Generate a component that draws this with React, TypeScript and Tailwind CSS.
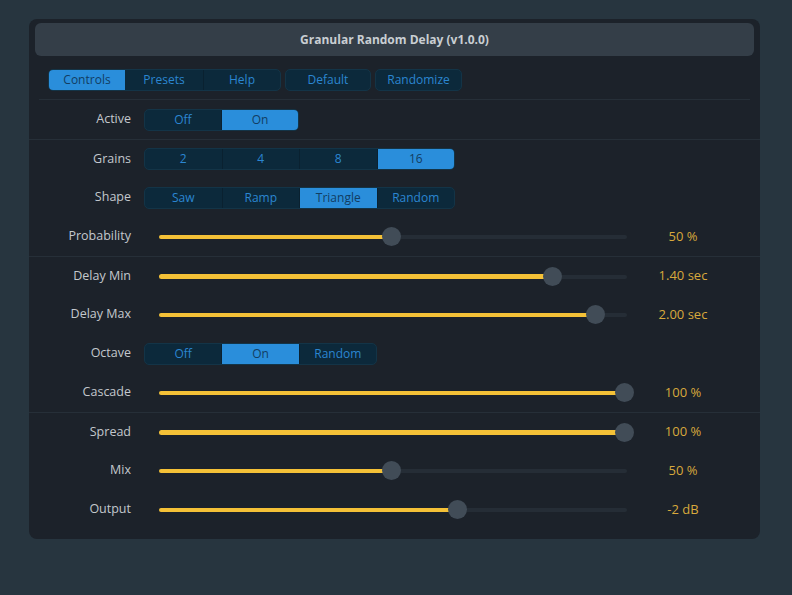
import React from "react";

const FONT = { fontFamily: '"Open Sans", "Noto Sans", sans-serif' };

function Segmented({ items, active, width }: { items: string[]; active: number; width: string }) {
  return (
    <div className={`flex h-[22px] ${width} overflow-hidden rounded-[5px] border border-[#133447] bg-[#0c293b]`}>
      {items.map((it, i) => (
        <div
          key={it}
          className={`flex flex-1 items-center justify-center text-[12px] ${i > 0 ? "border-l border-[#0a2130]" : ""} ${
            i === active ? "bg-[#2a8edb] text-[#123d62]" : "text-[#2b86d1]"
          }`}
        >
          {it}
        </div>
      ))}
    </div>
  );
}

function Slider({ value, label }: { value: number; label: string }) {
  const pos = value * 465;
  return (
    <div className="flex items-center">
      <div className="relative ml-[15px] h-[19px] w-[468px]">
        <div className="absolute left-0 right-0 top-[8px] h-[4px] rounded-full bg-[#252d36]" />
        <div className="absolute left-0 top-[7.5px] h-[4.5px] rounded-full bg-[#f4c137]" style={{ width: pos }} />
        <div className="absolute top-0 h-[19px] w-[19px] rounded-full bg-[#414c57]" style={{ left: pos - 9.5 }} />
      </div>
      <div className="w-[112px] text-center text-[13px] text-[#d8a93c]">{label}</div>
    </div>
  );
}

function Row({ label, children, line }: { label: string; children: React.ReactNode; line?: boolean }) {
  return (
    <div className={`flex h-[39px] items-center ${line ? "border-t border-[#262f38]" : ""}`}>
      <div className="w-[102px] text-right text-[12.5px] text-[#c3c8cd]">{label}</div>
      <div className="ml-[13px]">{children}</div>
    </div>
  );
}

export default function App() {
  return (
    <div className="h-[595px] w-[792px] bg-[#27353f] pl-[29px] pt-[19px]" style={FONT}>
      <div className="h-[520px] w-[731px] rounded-[8px] bg-[#1c222a] pt-[4px]">
        <div className="mx-[6px] flex h-[33px] items-center justify-center rounded-[6px] bg-[#343e48] text-[12px] font-bold text-[#c9ced3]">
          Granular Random Delay (v1.0.0)
        </div>
        <div className="mt-[4px] flex h-[39px] items-center pl-[19px]">
          <div className="flex h-[22px] overflow-hidden rounded-[5px] border border-[#133447] bg-[#0c293b] text-[12px]">
            <div className="flex w-[76px] items-center justify-center bg-[#2a8edb] text-[#123d62]">Controls</div>
            <div className="flex w-[78px] items-center justify-center text-[#2b86d1]">Presets</div>
            <div className="flex w-[77px] items-center justify-center border-l border-[#0a2130] text-[#2b86d1]">Help</div>
          </div>
          <div className="ml-[4px] flex h-[22px] w-[86px] items-center justify-center rounded-[5px] border border-[#133447] bg-[#0c293b] text-[12px] text-[#2b86d1]">
            Default
          </div>
          <div className="ml-[4px] flex h-[22px] w-[87px] items-center justify-center rounded-[5px] border border-[#133447] bg-[#0c293b] text-[12px] text-[#2b86d1]">
            Randomize
          </div>
        </div>
        <div className="mx-[10px] h-px bg-[#262f38]" />
        <div>
          <Row label="Active">
            <Segmented items={["Off", "On"]} active={1} width="w-[155px]" />
          </Row>
          <Row label="Grains" line>
            <Segmented items={["2", "4", "8", "16"]} active={3} width="w-[311px]" />
          </Row>
          <Row label="Shape">
            <Segmented items={["Saw", "Ramp", "Triangle", "Random"]} active={2} width="w-[311px]" />
          </Row>
          <Row label="Probability">
            <Slider value={0.5} label="50 %" />
          </Row>
          <Row label="Delay Min" line>
            <Slider value={0.847} label="1.40 sec" />
          </Row>
          <Row label="Delay Max">
            <Slider value={0.938} label="2.00 sec" />
          </Row>
          <Row label="Octave">
            <Segmented items={["Off", "On", "Random"]} active={1} width="w-[233px]" />
          </Row>
          <Row label="Cascade">
            <Slider value={1} label="100 %" />
          </Row>
          <Row label="Spread" line>
            <Slider value={1} label="100 %" />
          </Row>
          <Row label="Mix">
            <Slider value={0.5} label="50 %" />
          </Row>
          <Row label="Output">
            <Slider value={0.643} label="-2 dB" />
          </Row>
        </div>
      </div>
    </div>
  );
}
